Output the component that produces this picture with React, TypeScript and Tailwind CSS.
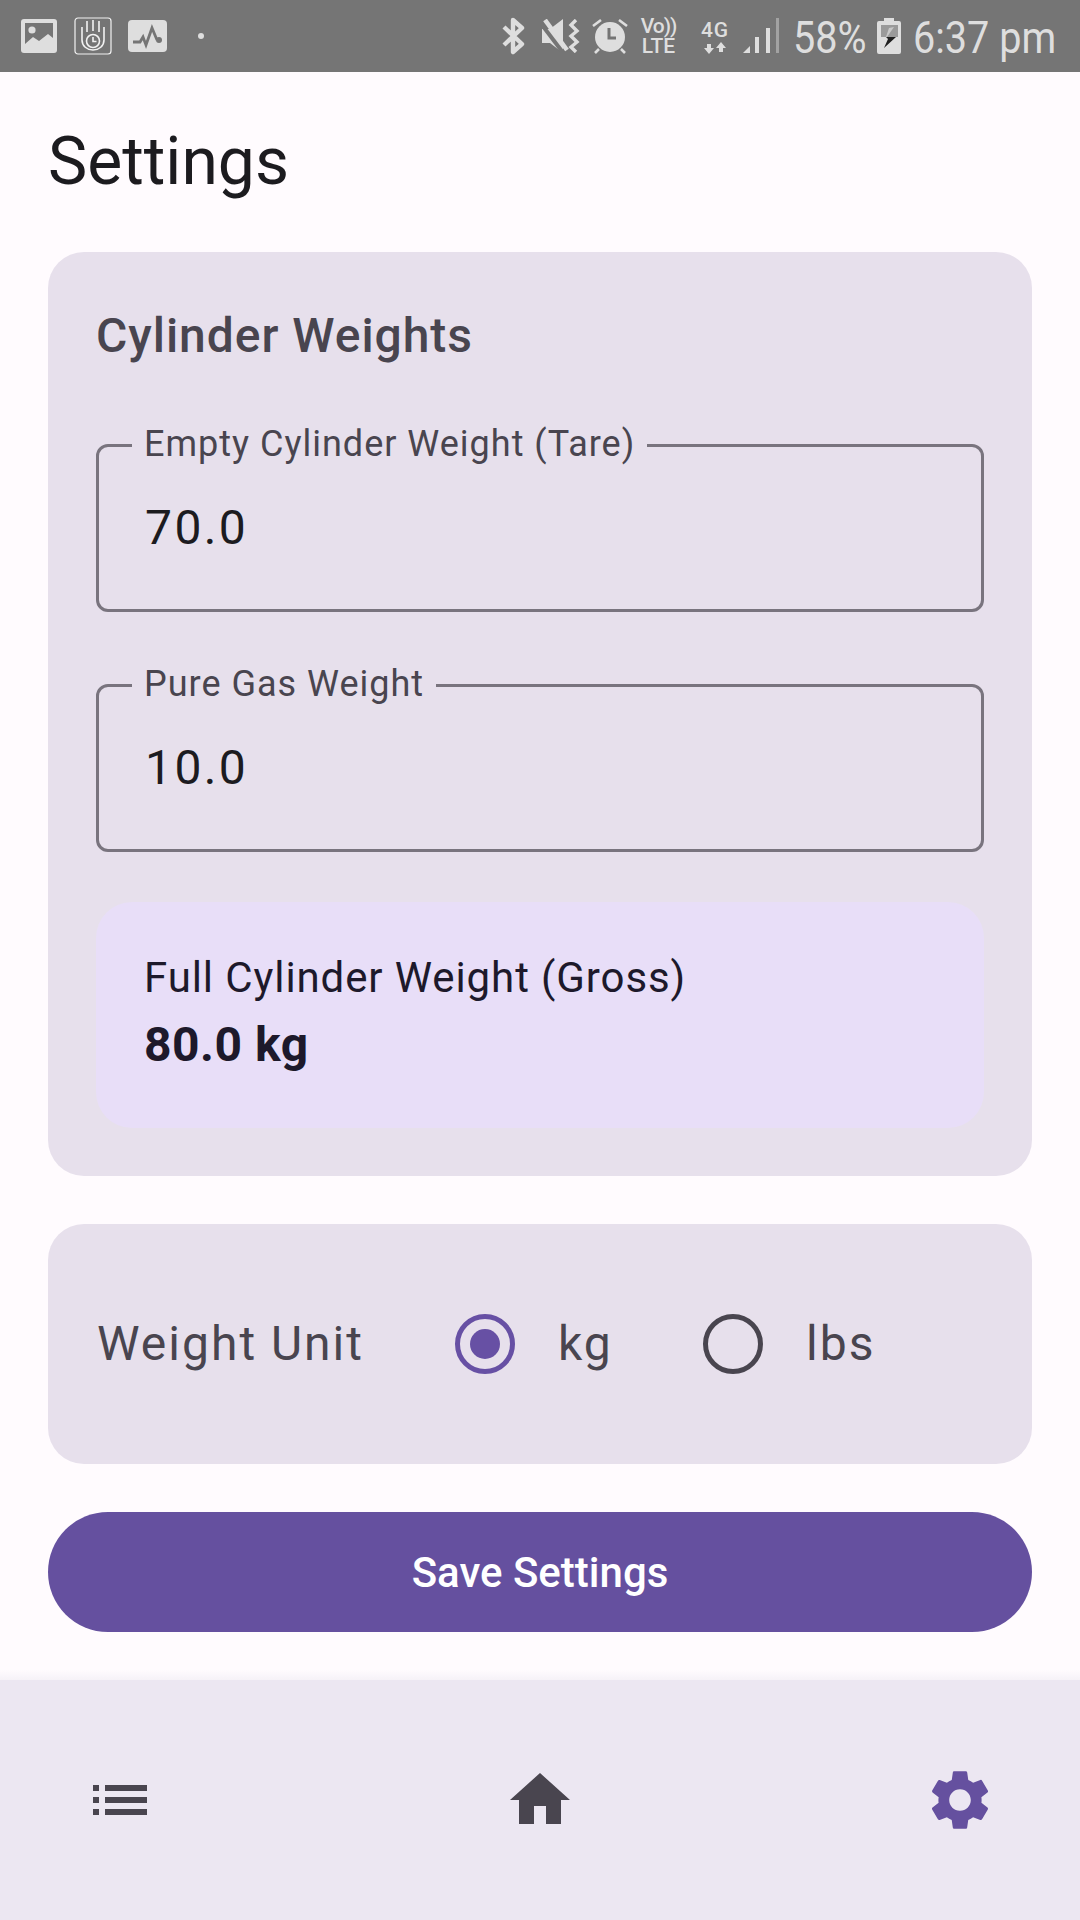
import { MdHome, MdList, MdSettings } from "react-icons/md";

function ImageIcon() {
  return (
    <svg width="36" height="34" viewBox="0 0 36 34" className="text-[#dedede]">
      <rect width="36" height="34" rx="3" fill="currentColor" />
      <rect x="4" y="4" width="28" height="26" fill="#757575" />
      <circle cx="11" cy="11" r="3.6" fill="currentColor" />
      <path d="M4 25l8-7 6 4 9-7 5 4v11H4z" fill="currentColor" />
    </svg>
  );
}

function HandIcon() {
  return (
    <svg width="38" height="38" viewBox="0 0 38 38" fill="none" stroke="#f2f2f2" strokeWidth="1.6">
      <rect x="1" y="1" width="36" height="36" rx="3" strokeWidth="1.2" />
      <path d="M13 4v11M19 3v11M25 4v11M8 10v13c0 6 5 10 11 10s11-4 11-10V10" />
      <circle cx="19" cy="24" r="6.5" />
      <path d="M19 20v4.5h3.5" />
    </svg>
  );
}

function ActivityIcon() {
  return (
    <svg width="39" height="32" viewBox="0 0 39 32">
      <rect width="39" height="32" rx="4" fill="#dedede" />
      <path d="M5 22h7l3-5 3 8 6-17 5 12" fill="none" stroke="#757575" strokeWidth="2.8" />
      <circle cx="31" cy="20" r="3" fill="#757575" />
    </svg>
  );
}

function BluetoothIcon() {
  return (
    <svg width="23" height="38" viewBox="0 0 23 38" fill="none" stroke="#dedede" strokeWidth="4.4" strokeLinejoin="round">
      <path d="M2 10l18 17-9 8V3l9 8L2 28" />
    </svg>
  );
}

function MuteIcon() {
  return (
    <svg width="38" height="34" viewBox="0 0 38 34" fill="#dedede">
      <path d="M0 10h8L21 0v34L8 24H0z" />
      <path d="M0 6l22 29" stroke="#757575" strokeWidth="4" />
      <path d="M3 1l22 30" stroke="#dedede" strokeWidth="4.5" />
      <path d="M34 1l-5 5 6 6-6 5 6 6-6 5 5 5" fill="none" stroke="#dedede" strokeWidth="3.4" />
    </svg>
  );
}

function AlarmIcon() {
  return (
    <svg width="36" height="36" viewBox="0 0 36 36" fill="none">
      <circle cx="18" cy="19" r="15" fill="#dedede" />
      <path d="M1 8l8-6M35 8l-8-6M7 31l-4 4M29 31l4 4" stroke="#dedede" strokeWidth="2.6" />
      <path d="M17 10v10h7" stroke="#757575" strokeWidth="3" />
    </svg>
  );
}

function VolteIcon() {
  return (
    <div className="flex w-[37px] flex-col items-center text-[21px] leading-[20px] font-medium text-[#dedede]">
      <span className="whitespace-nowrap tracking-[-1px]">Vo))</span>
      <span>LTE</span>
    </div>
  );
}

function NetworkIcon() {
  return (
    <div className="flex w-[28px] flex-col items-center text-[#dedede]">
      <span className="text-[21px] leading-[23px] font-medium tracking-[1px]">4G</span>
      <svg width="22" height="12" viewBox="0 0 22 12" fill="currentColor">
        <path d="M5 12L0 6h3V2h4v4h3zM17 0l5 6h-3v4h-4V6h-3z" />
      </svg>
    </div>
  );
}

function SignalIcon() {
  return (
    <svg width="36" height="36" viewBox="0 0 36 36">
      <path d="M0 35l7-7v7z" fill="#dedede" />
      <rect x="12" y="19" width="4" height="16" fill="#dedede" />
      <rect x="23" y="10" width="4" height="25" fill="#dedede" />
      <rect x="33" y="0" width="3" height="35" fill="#a2a2a2" />
    </svg>
  );
}

function BatteryIcon() {
  return (
    <svg width="24" height="36" viewBox="0 0 24 36">
      <path d="M7 0h10v3h5a2 2 0 012 2v29a2 2 0 01-2 2H2a2 2 0 01-2-2V5a2 2 0 012-2h5z" fill="#dedede" />
      <rect x="4" y="7" width="17" height="12" fill="#9a9a9a" />
      <path d="M17 9l-7 10h-1l3-9z" fill="#c8c8c8" />
      <path d="M9 19h10L7 30l4-9z" fill="#1f1f1f" />
    </svg>
  );
}

function StatusBar() {
  return (
    <div className="flex h-[72px] items-center bg-[#757575] pl-[21px]">
      <ImageIcon />
      <div className="ml-[17px]"><HandIcon /></div>
      <div className="ml-[16px]"><ActivityIcon /></div>
      <div className="ml-[31px] h-[6px] w-[6px] rounded-full bg-[#dedede]" />
      <div className="flex-1" />
      <BluetoothIcon />
      <div className="ml-[17px]"><MuteIcon /></div>
      <div className="ml-[12px]"><AlarmIcon /></div>
      <div className="ml-[12px]"><VolteIcon /></div>
      <div className="ml-[24px]"><NetworkIcon /></div>
      <div className="ml-[14px]"><SignalIcon /></div>
      <span className="ml-[14px] w-[71px] origin-left scale-x-[0.9] pt-[4px] text-[44px] leading-none whitespace-nowrap text-[#dedede]">58%</span>
      <div className="ml-[13px]"><BatteryIcon /></div>
      <span className="mr-[26px] ml-[12px] w-[141px] origin-left scale-x-[0.9] pt-[4px] text-[44px] leading-none whitespace-nowrap text-[#dedede]">6:37 pm</span>
    </div>
  );
}

function WeightField({ label, value }: { label: string; value: string }) {
  return (
    <div className="relative h-[168px] rounded-[12px] border-[3px] border-[#79747e] pl-[46px]">
      <span className="absolute top-[-21px] left-[33px] bg-[#e7e0ec] px-[12px] text-[36px] leading-[36px] tracking-[1px] whitespace-nowrap text-[#49454f]">
        {label}
      </span>
      <div className="flex h-full items-center text-[48px] tracking-[2.400px] text-[#1c1b1f]">{value}</div>
    </div>
  );
}

function RadioOption({ label, selected }: { label: string; selected: boolean }) {
  return (
    <div className="flex items-center">
      <div
        className={
          selected
            ? "flex h-[60px] w-[60px] items-center justify-center rounded-full border-[5px] border-[#6750a4]"
            : "flex h-[60px] w-[60px] items-center justify-center rounded-full border-[5px] border-[#49454f]"
        }
      >
        {selected && <div className="h-[30px] w-[30px] rounded-full bg-[#6750a4]" />}
      </div>
      <span className="ml-[43px] text-[48px] tracking-[2px] text-[#49454f]">{label}</span>
    </div>
  );
}

export default function App() {
  return (
    <div className="flex h-[1920px] w-[1080px] flex-col bg-[#fffbfe] font-['Roboto',sans-serif]">
      <StatusBar />

      <main className="flex flex-1 flex-col px-[48px]">
        <h1 className="mt-[48px] h-[84px] text-[66px] leading-[84px] text-[#1c1b1f]">Settings</h1>

        <section className="mt-[48px] rounded-[36px] bg-[#e7e0ec] p-[48px]">
          <h2 className="h-[72px] text-[48px] leading-[72px] font-medium tracking-[0.95px] text-[#49454f]">Cylinder Weights</h2>
          <div className="mt-[72px] flex flex-col gap-[72px]">
            <WeightField label="Empty Cylinder Weight (Tare)" value="70.0" />
            <WeightField label="Pure Gas Weight" value="10.0" />
          </div>
          <div className="mt-[50px] flex h-[226px] flex-col justify-center gap-[4px] rounded-[36px] bg-[#e8def8] px-[48px] pb-[4px] text-[#1d192b]">
            <span className="text-[42px] leading-[60px] tracking-[0.9px]">Full Cylinder Weight (Gross)</span>
            <span className="text-[48px] leading-[66px] font-bold tracking-[0.5px]">80.0 kg</span>
          </div>
        </section>

        <section className="mt-[48px] flex h-[240px] items-center rounded-[36px] bg-[#e7e0ec] pr-[50px] pl-[49px]">
          <span className="w-[358px] text-[48px] tracking-[2px] text-[#49454f]">Weight Unit</span>
          <div className="w-[248px]"><RadioOption label="kg" selected /></div>
          <RadioOption label="lbs" selected={false} />
        </section>

        <button className="mt-[48px] h-[120px] rounded-full bg-[#65509f] text-[42px] font-medium text-white">
          Save Settings
        </button>
      </main>

      <div className="h-[10px] bg-gradient-to-b from-[#fffbfe] to-[#f6f2f8]" />
      <nav className="flex h-[240px] items-center justify-between bg-[#ece7f2] px-[84px]">
        <MdList className="h-[72px] w-[72px] text-[#49454f]" />
        <MdHome className="h-[72px] w-[72px] text-[#49454f]" />
        <MdSettings className="h-[72px] w-[72px] text-[#65509f]" />
      </nav>
    </div>
  );
}
